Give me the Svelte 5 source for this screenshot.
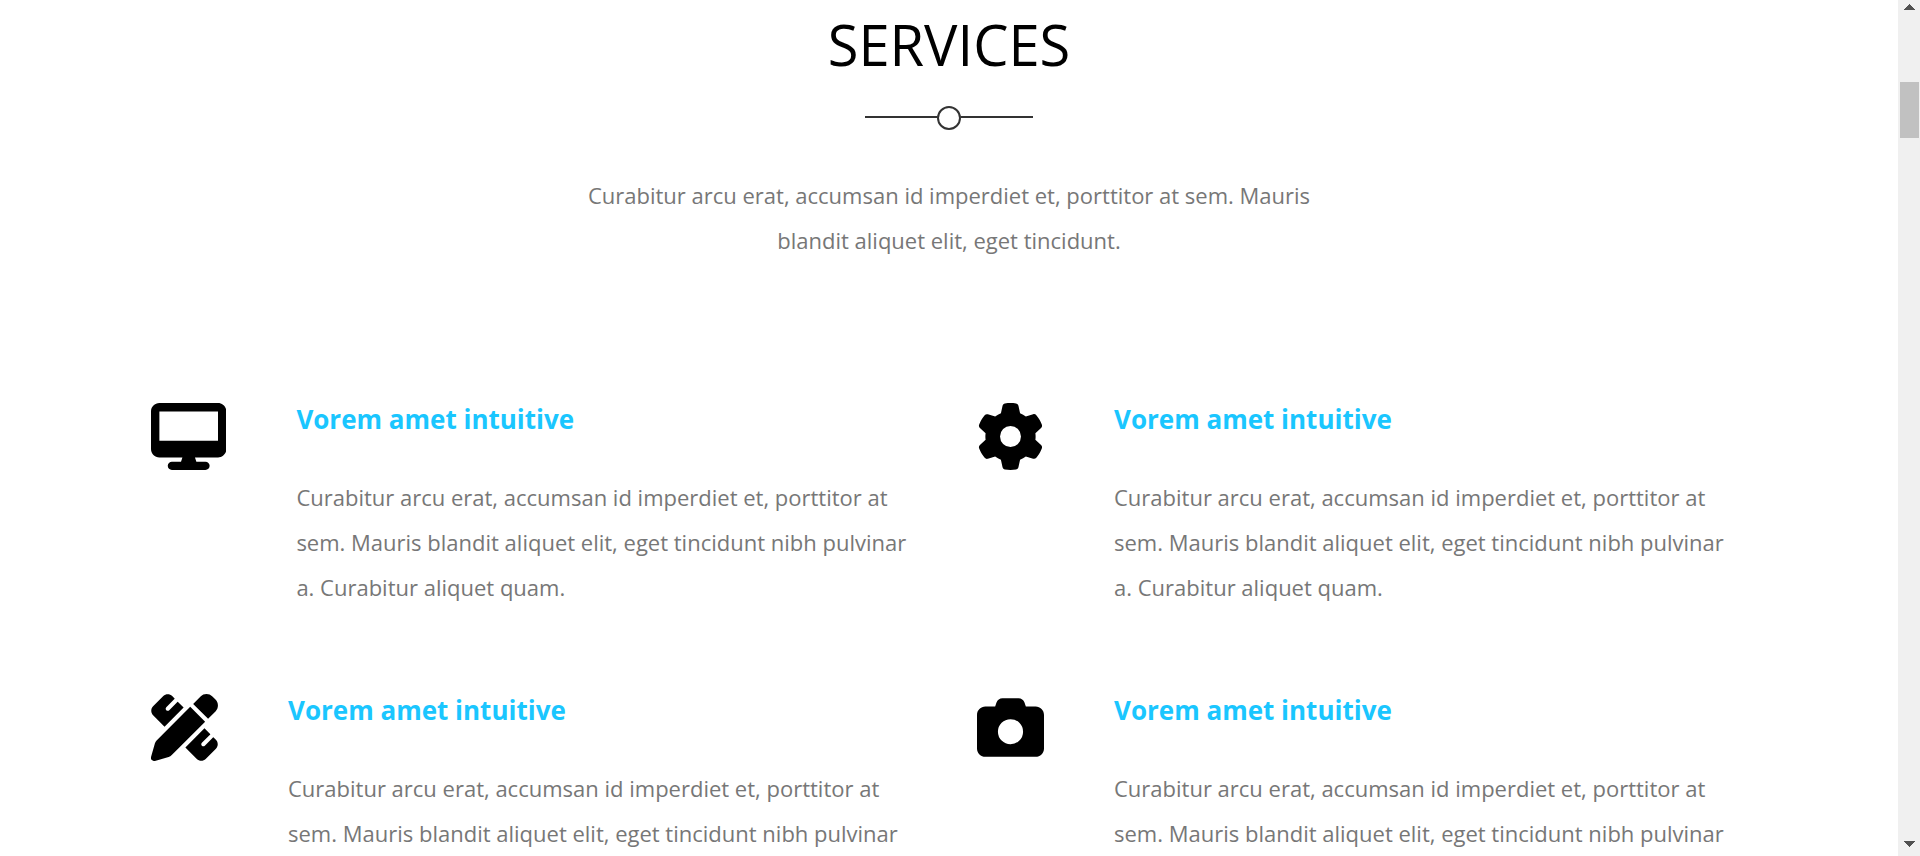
<script>
  const description =
    'Curabitur arcu erat, accumsan id imperdiet et, porttitor at sem. Mauris blandit aliquet elit, eget tincidunt nibh pulvinar a. Curabitur aliquet quam.';

  const services = [
    {
      width: 576,
      path: 'M64 0C28.7 0 0 28.7 0 64V352c0 35.3 28.7 64 64 64H240l-10.7 32H160c-17.7 0-32 14.3-32 32s14.3 32 32 32H416c17.7 0 32-14.3 32-32s-14.3-32-32-32H346.7L336 416H512c35.3 0 64-28.7 64-64V64c0-35.3-28.7-64-64-64H64zM512 64V288H64V64H512z'
    },
    {
      width: 512,
      path: 'M495.9 166.6c3.2 8.7 .5 18.4-6.4 24.6l-43.3 39.4c1.1 8.3 1.7 16.8 1.7 25.4s-.6 17.1-1.7 25.4l43.3 39.4c6.9 6.2 9.6 15.9 6.4 24.6c-4.4 11.9-9.7 23.3-15.8 34.3l-4.7 8.1c-6.6 11-14 21.4-22.1 31.2c-5.9 7.2-15.7 9.6-24.5 6.8l-55.7-17.7c-13.4 10.3-28.2 18.9-44 25.4l-12.5 57.1c-2 9.1-9 16.3-18.2 17.8c-13.8 2.3-28 3.5-42.5 3.5s-28.7-1.2-42.5-3.5c-9.2-1.5-16.2-8.7-18.2-17.8l-12.5-57.1c-15.8-6.5-30.6-15.1-44-25.4L83.1 425.9c-8.8 2.8-18.6 .3-24.5-6.8c-8.1-9.8-15.5-20.2-22.1-31.2l-4.7-8.1c-6.1-11-11.4-22.4-15.8-34.3c-3.2-8.7-.5-18.4 6.4-24.6l43.3-39.4C64.6 273.1 64 264.6 64 256s.6-17.1 1.7-25.4L22.4 191.2c-6.9-6.2-9.6-15.9-6.4-24.6c4.4-11.9 9.7-23.3 15.8-34.3l4.7-8.1c6.6-11 14-21.4 22.1-31.2c5.9-7.2 15.7-9.6 24.5-6.8l55.7 17.7c13.4-10.3 28.2-18.9 44-25.4l12.5-57.1c2-9.1 9-16.3 18.2-17.8C227.3 1.2 241.5 0 256 0s28.7 1.2 42.5 3.5c9.2 1.5 16.2 8.7 18.2 17.8l12.5 57.1c15.8 6.5 30.6 15.1 44 25.4l55.7-17.7c8.8-2.8 18.6-.3 24.5 6.8c8.1 9.8 15.5 20.2 22.1 31.2l4.7 8.1c6.1 11 11.4 22.4 15.8 34.3zM256 336a80 80 0 1 0 0-160 80 80 0 1 0 0 160z'
    },
    {
      width: 512,
      path: 'M469.3 19.3l23.4 23.4c25 25 25 65.5 0 90.5l-56.4 56.4L322.3 75.7l56.4-56.4c25-25 65.5-25 90.5 0zM44.9 353.2L299.7 98.3 413.7 212.3 158.8 467.1c-6.7 6.7-15.1 11.6-24.2 14.2l-104.7 29.9c-8.4 2.4-17.4 .1-23.6-6.1s-8.5-15.2-6.1-23.6l29.9-104.7c2.6-9.2 7.5-17.5 14.2-24.2zM249.4 103.4L103.4 249.4 16 161.9c-18.7-18.7-18.7-49.1 0-67.9L94.1 16c18.7-18.7 49.1-18.7 67.9 0l19.8 19.8c-.3 .3-.7 .6-1 .9l-64 64c-6.2 6.2-6.2 16.4 0 22.6s16.4 6.2 22.6 0l64-64c.3-.3 .6-.7 .9-1l45.1 45.1zM408.6 262.6l45.1 45.1c-.3 .3-.7 .6-1 .9l-64 64c-6.2 6.2-6.2 16.4 0 22.6s16.4 6.2 22.6 0l64-64c.3-.3 .6-.7 .9-1L496 350.1c18.7 18.7 18.7 49.1 0 67.9L417.9 496c-18.7 18.7-49.1 18.7-67.9 0l-87.4-87.4L408.6 262.6z'
    },
    {
      width: 512,
      path: 'M149.1 64.8L138.7 96H64C28.7 96 0 124.7 0 160V416c0 35.3 28.7 64 64 64H448c35.3 0 64-28.7 64-64V160c0-35.3-28.7-64-64-64H373.3L362.9 64.8C356.4 45.2 338.1 32 317.4 32H194.6c-20.7 0-39 13.2-45.5 32.8zM256 192a96 96 0 1 1 0 192 96 96 0 1 1 0-192z'
    }
  ];
</script>

<div class="window">
  <main>
    <header>
      <h1>SERVICES</h1>
      <div class="divider"><span></span></div>
      <p>Curabitur arcu erat, accumsan id imperdiet et, porttitor at sem. Mauris blandit aliquet elit, eget tincidunt.</p>
    </header>

    <section class="services">
      {#each services as service}
        <article>
          <svg viewBox="0 0 {service.width} 512" aria-hidden="true"><path d={service.path} /></svg>
          <div class="text">
            <h2>Vorem amet intuitive</h2>
            <p>{description}</p>
          </div>
        </article>
      {/each}
    </section>
  </main>

  <div class="scrollbar" aria-hidden="true">
    <svg viewBox="0 0 11 6"><path d="M5 0h1v1h1v1h1v1h1v1h1v1h1v1H0V5h1V4h1V3h1V2h1V1h1z" /></svg>
    <div class="track"><div class="thumb"></div></div>
    <svg viewBox="0 0 11 6"><path d="M5 6h1V5h1V4h1V3h1V2h1V1h1V0H0v1h1v1h1v1h1v1h1v1h1z" /></svg>
  </div>
</div>

<style>
  .window {
    display: flex;
    height: 100vh;
    overflow: hidden;
    background: #fff;
    color: #777;
    font: 22px/45px "Open Sans", sans-serif;
  }

  main {
    flex: 1;
    min-width: 0;
    padding: 0 151px;
  }

  header {
    display: flex;
    flex-direction: column;
    align-items: center;
    text-align: center;
  }

  h1,
  h2,
  p {
    margin: 0;
  }

  h1 {
    padding-top: 6px;
    color: #000;
    font-size: 56px;
    font-weight: 400;
    line-height: 76px;
  }

  .divider {
    display: flex;
    width: 168px;
    height: 24px;
    margin: 24px 0 43px;
  }

  .divider::before,
  .divider::after {
    content: "";
    flex: 1;
    height: 2px;
    margin-top: 10px;
    background: #333;
  }

  .divider span {
    box-sizing: border-box;
    width: 24px;
    height: 24px;
    border: 2px solid #333;
    border-radius: 50%;
  }

  header p {
    max-width: 760px;
  }

  .services {
    display: grid;
    grid-template-columns: 1fr 1fr;
    gap: 78px 56px;
    padding-top: 134px;
  }

  article {
    display: flex;
    gap: 70px;
  }

  article svg {
    flex: none;
    height: 67px;
    margin-top: 6px;
  }

  .text {
    min-width: 0;
  }

  h2 {
    margin-bottom: 33px;
    color: #1ac6ff;
    font-size: 26px;
    font-weight: 700;
    line-height: 45px;
  }

  .scrollbar {
    display: flex;
    flex-direction: column;
    align-items: center;
    width: 22px;
    padding: 4px 0 9px;
    box-sizing: border-box;
    background: #f0f0f0;
  }

  .scrollbar svg {
    flex: none;
    width: 11px;
    height: 6px;
    fill: #505050;
    shape-rendering: crispEdges;
  }

  .track {
    flex: 1;
    align-self: stretch;
    padding: 72px 1px 0 2px;
  }

  .thumb {
    height: 56px;
    background: #c1c1c1;
  }
</style>
